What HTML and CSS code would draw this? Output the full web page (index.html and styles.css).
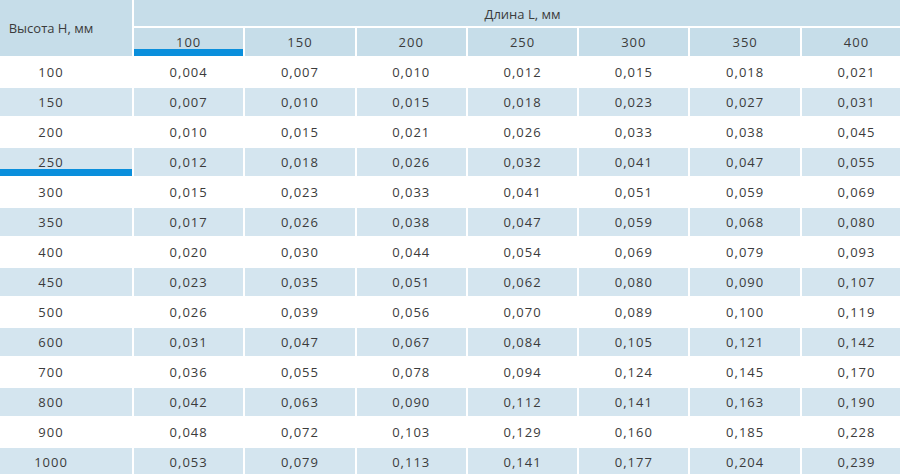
FILE: index.html
```html
<!DOCTYPE html>
<html lang="ru">
<head>
<meta charset="utf-8">
<link rel="stylesheet" href="styles.css">
</head>
<body>
<div class="wrap">
  <div class="grid head">
    <div class="cell hcorner">Высота Н, мм</div>
    <div class="cell htop">Длина L, мм</div>
    <div class="cell hcol active">100</div>
    <div class="cell hcol">150</div>
    <div class="cell hcol">200</div>
    <div class="cell hcol">250</div>
    <div class="cell hcol">300</div>
    <div class="cell hcol">350</div>
    <div class="cell hcol">400</div>
  </div>
  <div class="grid body">
    <div class="cell first">100</div><div class="cell">0,004</div><div class="cell">0,007</div><div class="cell">0,010</div><div class="cell">0,012</div><div class="cell">0,015</div><div class="cell">0,018</div><div class="cell">0,021</div>
    <div class="cell alt first">150</div><div class="cell alt">0,007</div><div class="cell alt">0,010</div><div class="cell alt">0,015</div><div class="cell alt">0,018</div><div class="cell alt">0,023</div><div class="cell alt">0,027</div><div class="cell alt">0,031</div>
    <div class="cell first">200</div><div class="cell">0,010</div><div class="cell">0,015</div><div class="cell">0,021</div><div class="cell">0,026</div><div class="cell">0,033</div><div class="cell">0,038</div><div class="cell">0,045</div>
    <div class="cell alt first active">250</div><div class="cell alt">0,012</div><div class="cell alt">0,018</div><div class="cell alt">0,026</div><div class="cell alt">0,032</div><div class="cell alt">0,041</div><div class="cell alt">0,047</div><div class="cell alt">0,055</div>
    <div class="cell first">300</div><div class="cell">0,015</div><div class="cell">0,023</div><div class="cell">0,033</div><div class="cell">0,041</div><div class="cell">0,051</div><div class="cell">0,059</div><div class="cell">0,069</div>
    <div class="cell alt first">350</div><div class="cell alt">0,017</div><div class="cell alt">0,026</div><div class="cell alt">0,038</div><div class="cell alt">0,047</div><div class="cell alt">0,059</div><div class="cell alt">0,068</div><div class="cell alt">0,080</div>
    <div class="cell first">400</div><div class="cell">0,020</div><div class="cell">0,030</div><div class="cell">0,044</div><div class="cell">0,054</div><div class="cell">0,069</div><div class="cell">0,079</div><div class="cell">0,093</div>
    <div class="cell alt first">450</div><div class="cell alt">0,023</div><div class="cell alt">0,035</div><div class="cell alt">0,051</div><div class="cell alt">0,062</div><div class="cell alt">0,080</div><div class="cell alt">0,090</div><div class="cell alt">0,107</div>
    <div class="cell first">500</div><div class="cell">0,026</div><div class="cell">0,039</div><div class="cell">0,056</div><div class="cell">0,070</div><div class="cell">0,089</div><div class="cell">0,100</div><div class="cell">0,119</div>
    <div class="cell alt first">600</div><div class="cell alt">0,031</div><div class="cell alt">0,047</div><div class="cell alt">0,067</div><div class="cell alt">0,084</div><div class="cell alt">0,105</div><div class="cell alt">0,121</div><div class="cell alt">0,142</div>
    <div class="cell first">700</div><div class="cell">0,036</div><div class="cell">0,055</div><div class="cell">0,078</div><div class="cell">0,094</div><div class="cell">0,124</div><div class="cell">0,145</div><div class="cell">0,170</div>
    <div class="cell alt first">800</div><div class="cell alt">0,042</div><div class="cell alt">0,063</div><div class="cell alt">0,090</div><div class="cell alt">0,112</div><div class="cell alt">0,141</div><div class="cell alt">0,163</div><div class="cell alt">0,190</div>
    <div class="cell first">900</div><div class="cell">0,048</div><div class="cell">0,072</div><div class="cell">0,103</div><div class="cell">0,129</div><div class="cell">0,160</div><div class="cell">0,185</div><div class="cell">0,228</div>
    <div class="cell alt first">1000</div><div class="cell alt">0,053</div><div class="cell alt">0,079</div><div class="cell alt">0,113</div><div class="cell alt">0,141</div><div class="cell alt">0,177</div><div class="cell alt">0,204</div><div class="cell alt">0,239</div>
  </div>
</div>
</body>
</html>
```

FILE: styles.css
```css
html, body {
  margin: 0;
  padding: 0;
  background: #fff;
}
body {
  font-family: "Open Sans", "Noto Sans", sans-serif;
  color: #3b3b3b;
}
.wrap {
  width: 900px;
  height: 474px;
  overflow: hidden;
}
.grid {
  display: grid;
  grid-template-columns: 132px repeat(7, 109.3px);
  column-gap: 2px;
  row-gap: 2px;
  width: 911px;
}
.head {
  grid-template-rows: 26px 28px;
}
.body {
  margin-top: 2px;
  grid-auto-rows: 28px;
}
.cell {
  display: flex;
  align-items: center;
  justify-content: center;
  font-size: 13px;
  letter-spacing: 1px;
  background: #fff;
}
.hcorner {
  grid-row: 1 / span 2;
  background: #c6dde9;
  font-size: 13px;
  letter-spacing: 0;
  padding-right: 30px;
}
.htop {
  grid-column: 2 / span 7;
  background: #c6dde9;
  font-size: 13px;
  letter-spacing: 0;
  padding-top: 1px;
}
.hcol {
  background: #c6dde9;
}
.alt {
  background: #d4e5ef;
}
.first {
  padding-right: 30px;
}
.active {
  box-shadow: inset 0 -7px 0 #0a8fdc;
}
```
